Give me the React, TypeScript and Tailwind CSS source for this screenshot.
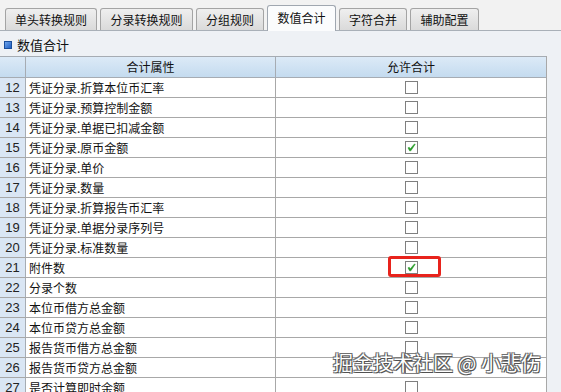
import React from 'react';

const TABS = [
  { label: '单头转换规则', w: 'w-[92px]' },
  { label: '分录转换规则', w: 'w-[93px]' },
  { label: '分组规则', w: 'w-[68px]' },
  { label: '数值合计', w: 'w-[69px]', active: true },
  { label: '字符合并', w: 'w-[68px]' },
  { label: '辅助配置', w: 'w-[69px]' },
];

const ROWS: Array<{ no: number; name: string; checked?: boolean; marked?: boolean }> = [
  { no: 12, name: '凭证分录.折算本位币汇率' },
  { no: 13, name: '凭证分录.预算控制金额' },
  { no: 14, name: '凭证分录.单据已扣减金额' },
  { no: 15, name: '凭证分录.原币金额', checked: true },
  { no: 16, name: '凭证分录.单价' },
  { no: 17, name: '凭证分录.数量' },
  { no: 18, name: '凭证分录.折算报告币汇率' },
  { no: 19, name: '凭证分录.单据分录序列号' },
  { no: 20, name: '凭证分录.标准数量' },
  { no: 21, name: '附件数', checked: true, marked: true },
  { no: 22, name: '分录个数' },
  { no: 23, name: '本位币借方总金额' },
  { no: 24, name: '本位币贷方总金额' },
  { no: 25, name: '报告货币借方总金额' },
  { no: 26, name: '报告货币贷方总金额' },
  { no: 27, name: '是否计算即时余额' },
];

const Checkbox: React.FC<{ checked?: boolean }> = ({ checked }) => (
  <div className="w-[13px] h-[13px] border border-[#7f7f7f] bg-white flex items-center justify-center">
    {checked && (
      <svg width="9" height="9" viewBox="0 0 9 9">
        <path d="M1 4.8 L2.6 7.8 L3.8 7.8 L8.2 1.2 L7.2 1.2 L3.2 6 L2.4 4.4 Z" fill="#259a25" stroke="#259a25" strokeWidth="0.6" strokeLinejoin="round" />
      </svg>
    )}
  </div>
);

const App: React.FC = () => {
  return (
    <div className="relative w-[561px] h-[392px] overflow-hidden bg-[#f2f2f2] font-['Noto_Sans_CJK_SC',sans-serif] text-[12px] text-[#111]">
      {/* Tabs */}
      <div className="h-[31px] flex items-end gap-[3px] pl-[5px] border-b border-[#a9b0b8]">
        {TABS.map((tab) =>
          tab.active ? (
            <div
              key={tab.label}
              className={`${tab.w} h-[26px] -mb-px flex items-center justify-center rounded-t-[3px] border border-b-0 border-[#a0a7b0] bg-[#fbfcfd] pb-[2px]`}
            >
              {tab.label}
            </div>
          ) : (
            <div
              key={tab.label}
              className={`${tab.w} h-[22px] flex items-center justify-center rounded-t-[3px] border border-b-0 border-[#a4a4a4] bg-gradient-to-b from-[#efefef] to-[#dadada]`}
            >
              {tab.label}
            </div>
          )
        )}
      </div>

      {/* Panel */}
      <div className="bg-[#eef1f5] h-[361px]">
        <div className="h-[25px] flex items-center pl-[4px] gap-[5px] pt-[2px]">
          <div className="w-[8px] h-[8px] border border-[#1b4f9c] bg-gradient-to-br from-[#6fa4ea] to-[#1d5fc4]" />
          <span className="text-[13px]">数值合计</span>
        </div>

        <div className="w-[547px] border-r border-[#a8a8a8] bg-white">
          {/* Header */}
          <div className="flex h-[22px] border-t border-b border-[#a6acb3] bg-gradient-to-b from-[#dceaf7] to-[#c4dbef]">
            <div className="w-[26px] border-r border-[#a6acb3]" />
            <div className="w-[250px] border-r border-[#a6acb3] flex items-center justify-center">合计属性</div>
            <div className="flex-1 flex items-center justify-center">允许合计</div>
          </div>

          {ROWS.map((row) => (
            <div key={row.no} className="flex h-[20px] border-b border-[#a8a8a8]">
              <div className="w-[26px] border-r border-[#a6acb3] bg-[#dae6f4] flex items-center justify-center font-['Liberation_Sans',sans-serif] text-[13px] text-[#222]">
                {row.no}
              </div>
              <div className="w-[250px] border-r border-[#a8a8a8] flex items-center pl-[3px] whitespace-nowrap">
                {row.name}
              </div>
              <div className="relative flex-1 flex items-center justify-center">
                <Checkbox checked={row.checked} />
                {row.marked && (
                  <div className="absolute left-[112px] top-[-2px] w-[53px] h-[21px] rounded-[3px] border-[3px] border-[#e8231c]" />
                )}
              </div>
            </div>
          ))}
        </div>
      </div>

      {/* Watermark */}
      <div className="absolute left-[333px] top-[351px] text-[20px] leading-[24px] text-white whitespace-nowrap [text-shadow:0_0_1px_#333,1px_1px_0_#555,-1px_-1px_0_#777,1px_-1px_0_#777,-1px_1px_0_#777]">
        掘金技术社区 @ 小悲伤
      </div>
    </div>
  );
};

export default App;
